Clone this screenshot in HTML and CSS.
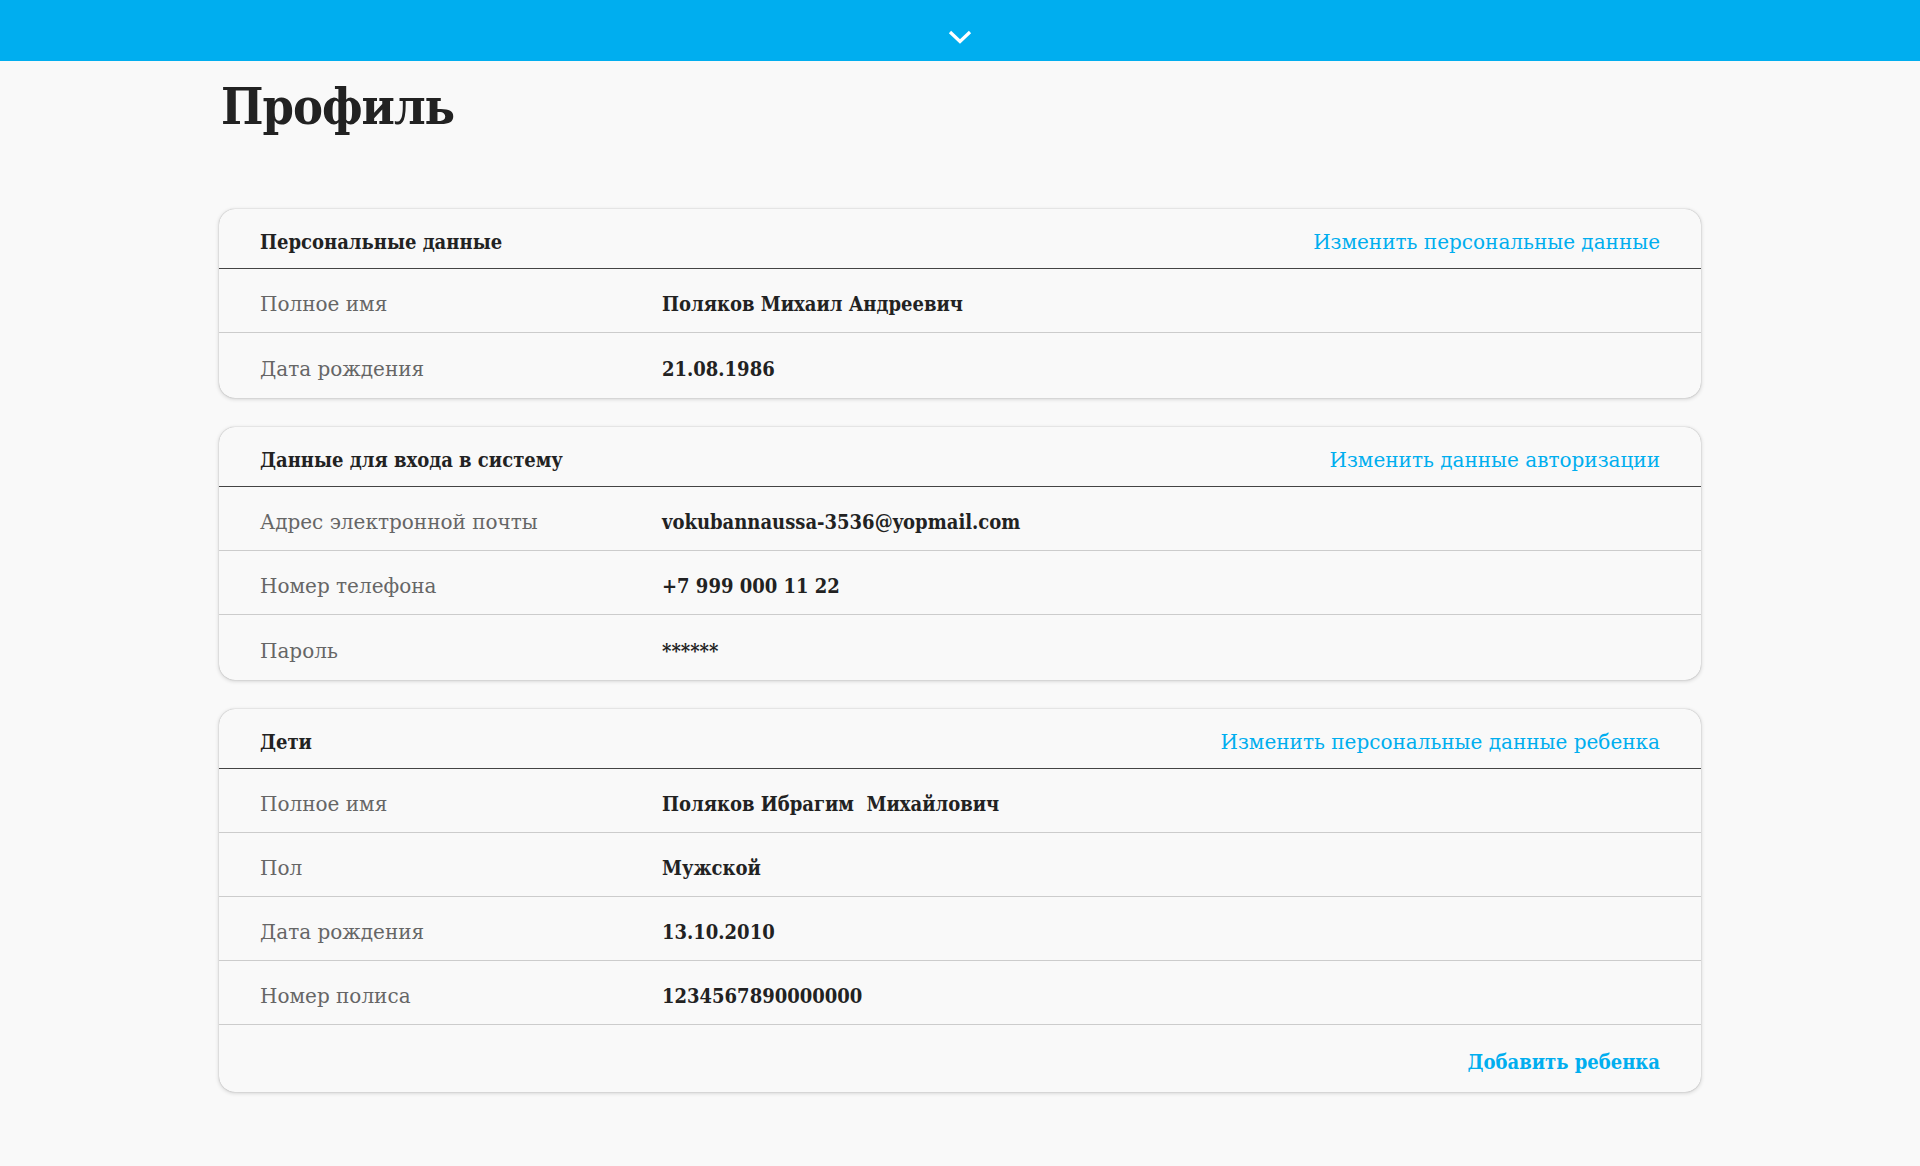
FILE: index.html
```html
<!DOCTYPE html>
<html lang="ru">
<head>
<meta charset="utf-8">
<title>Профиль</title>
<link rel="stylesheet" href="styles.css">
</head>
<body>
<header class="topbar">
  <svg class="chevron" width="24" height="14" viewBox="0 0 24 14"><path d="M2 2 L12 11.5 L22 2" fill="none" stroke="#fff" stroke-width="3.2"/></svg>
</header>
<main class="page">
  <h1 class="title">Профиль</h1>

  <section class="card">
    <div class="card-head">
      <span class="card-title">Персональные данные</span>
      <a class="link">Изменить персональные данные</a>
    </div>
    <div class="row"><span class="label">Полное имя</span><span class="value">Поляков Михаил Андреевич</span></div>
    <div class="row"><span class="label">Дата рождения</span><span class="value">21.08.1986</span></div>
  </section>

  <section class="card">
    <div class="card-head">
      <span class="card-title">Данные для входа в систему</span>
      <a class="link">Изменить данные авторизации</a>
    </div>
    <div class="row"><span class="label">Адрес электронной почты</span><span class="value">vokubannaussa-3536@yopmail.com</span></div>
    <div class="row"><span class="label">Номер телефона</span><span class="value">+7 999 000 11 22</span></div>
    <div class="row"><span class="label">Пароль</span><span class="value">******</span></div>
  </section>

  <section class="card">
    <div class="card-head">
      <span class="card-title">Дети</span>
      <a class="link">Изменить персональные данные ребенка</a>
    </div>
    <div class="row"><span class="label">Полное имя</span><span class="value">Поляков Ибрагим&nbsp; Михайлович</span></div>
    <div class="row"><span class="label">Пол</span><span class="value">Мужской</span></div>
    <div class="row"><span class="label">Дата рождения</span><span class="value">13.10.2010</span></div>
    <div class="row"><span class="label">Номер полиса</span><span class="value">1234567890000000</span></div>
    <div class="card-foot"><a class="link link-bold">Добавить ребенка</a></div>
  </section>
</main>
</body>
</html>
```

FILE: styles.css
```css
* { box-sizing: border-box; }

body {
  margin: 0;
  background: #f9f9f9;
  font-family: "DejaVu Serif", "Liberation Serif", serif;
  color: #222;
}

.topbar {
  height: 61px;
  background: #00aeef;
  display: flex;
  justify-content: center;
  padding-top: 30px;
}

.chevron { display: block; }

.page {
  width: 1482px;
  margin: 0 auto;
  padding-bottom: 60px;
}

.title {
  margin: 16px 0 0 2px;
  font-family: "DejaVu Serif Condensed", "DejaVu Serif", serif;
  font-stretch: condensed;
  font-size: 50px;
  line-height: 60px;
  font-weight: 700;
  letter-spacing: -1px;
  color: #222;
  height: 132px;
}

.card {
  background: #f9f9f9;
  border-radius: 16px;
  box-shadow: 0 0 1px rgba(0,0,0,0.35), 0 1px 4px rgba(0,0,0,0.18);
  margin-bottom: 29px;
}

.card-head {
  height: 60px;
  border-bottom: 1px solid #444;
  display: flex;
  align-items: center;
  justify-content: space-between;
  padding: 6px 41px 0 41px;
}

.card-title {
  font-family: "DejaVu Serif Condensed", "DejaVu Serif", serif;
  font-stretch: condensed;
  font-size: 20px;
  font-weight: 700;
  color: #222;
}

.link {
  font-size: 20px;
  color: #00aeef;
  cursor: pointer;
}

.link-bold {
  font-family: "DejaVu Serif Condensed", "DejaVu Serif", serif;
  font-stretch: condensed;
  font-weight: 700;
}

.row {
  height: 64px;
  display: grid;
  grid-template-columns: 402px 1fr;
  align-items: center;
  padding: 6px 41px 0 41px;
  border-bottom: 1px solid #ccc;
}

.card > .row:last-child { border-bottom: none; height: 65px; }

.label {
  font-size: 20px;
  color: #666;
}

.value {
  font-family: "DejaVu Serif Condensed", "DejaVu Serif", serif;
  font-stretch: condensed;
  font-size: 20px;
  font-weight: 700;
  color: #222;
}

.card-foot {
  height: 67px;
  display: flex;
  align-items: center;
  justify-content: flex-end;
  padding: 6px 41px 0 41px;
}
```
